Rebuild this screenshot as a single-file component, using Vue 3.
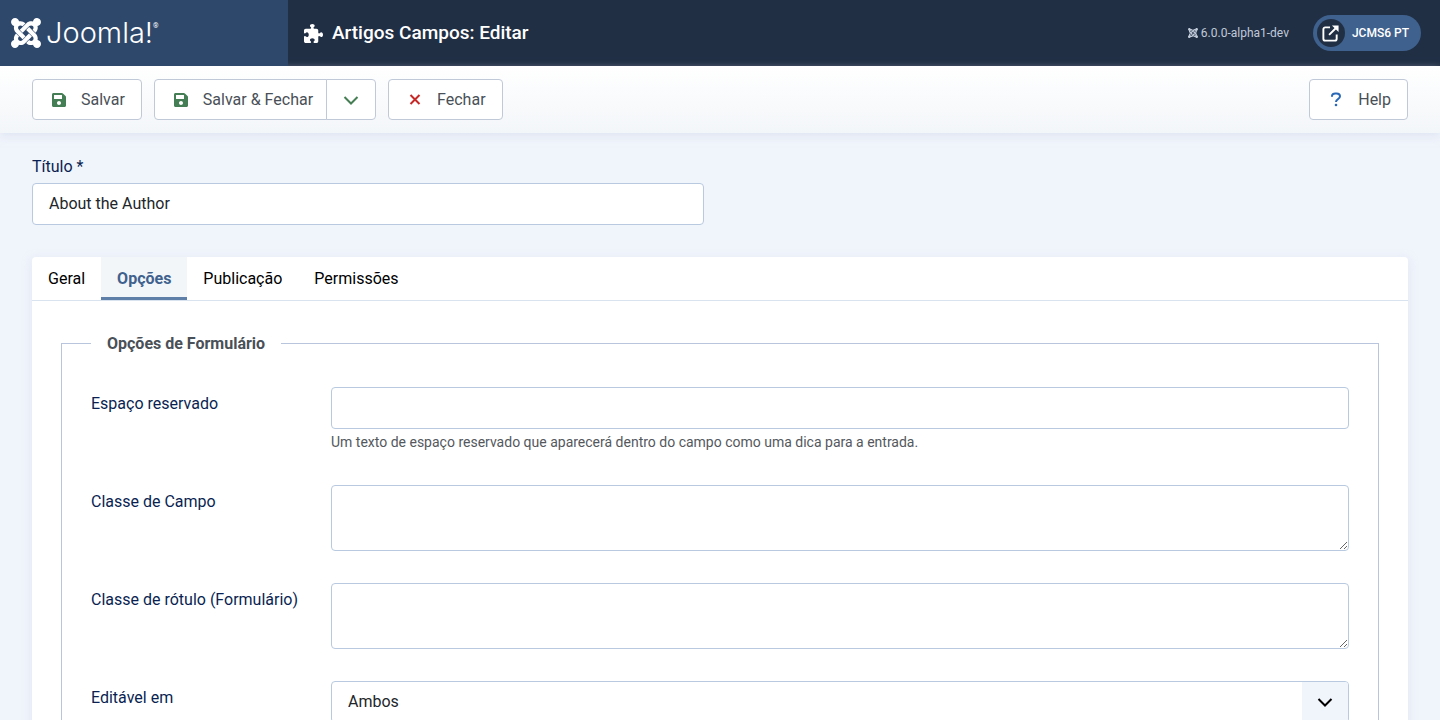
<script setup>
import { ref } from 'vue'

const title = ref('About the Author')
const activeTab = ref('Opções')
const tabs = ['Geral', 'Opções', 'Publicação', 'Permissões']
const placeholder = ref('')
const fieldClass = ref('')
const labelClass = ref('')
const editableIn = ref('Ambos')

const joomlaPath =
  'M.6 92.1C.6 58.8 27.4 32 60.4 32c30 0 54.5 21.9 59.2 50.2 32.6-7.6 67.1.6 96.5 30l-44.3 44.3c-20.5-20.5-42.6-16.3-55.4-3.5-14.3 14.3-14.3 37.9 0 52.2l99.5 99.5-44 44.3c-87.7-87.2-49.7-49.7-99.8-99.7-26.8-26.5-35-64.8-24.8-98.9C20.4 144.6.6 120.7.6 92.1zm129.5 116.4l44.3 44.3c10-10 89.7-89.7 99.7-99.8 14.3-14.3 37.6-14.3 51.9 0 12.8 12.8 17 35-3.5 55.4l44 44.3c31.2-31.2 38.5-67.6 28.9-101.2 29.2-4.1 51.9-29.2 51.9-59.5 0-33.2-26.8-60.1-59.8-60.1-30.3 0-55.4 22.5-59.5 51.6-33.8-9.9-71.7-1.5-98.3 25.1-18.3 19.1-71.1 71.5-99.6 99.9zm266.3 152.2c8.2-32.7-.9-68.5-26.3-93.9-11.8-12.2 5 4.7-99.5-99.7l-44.3 44.3 99.7 99.7c14.3 14.3 14.3 37.6 0 51.9-12.8 12.8-35 17-55.4-3.5l-44 44.3c27.6 30.2 68 38.8 102.7 28 5.5 27.4 29.7 48.1 58.9 48.1 33 0 59.8-26.8 59.8-60.1 0-30.2-22.5-55-51.6-59.1zm-84.3-53.1l-44-44.3c-87 86.4-50.4 50.4-99.7 99.8-14.3 14.3-37.6 14.3-51.9 0-13.1-13.4-16.9-35.3 3.2-55.4l-44-44.3c-30.2 30.2-38 65.2-29.5 98.3-26.7 6-46.2 29.9-46.2 58.2C0 453.2 26.8 480 59.8 480c28.6 0 52.5-19.8 58.6-46.7 32.7 8.2 68.5-.6 94.2-26 32.1-32 12.2-12.4 99.5-99.7z'
const savePath =
  'M433.941 129.941l-83.882-83.882A48 48 0 0 0 316.118 32H48C21.49 32 0 53.49 0 80v352c0 26.51 21.49 48 48 48h352c26.51 0 48-21.49 48-48V163.882a48 48 0 0 0-14.059-33.941zM224 416c-35.346 0-64-28.654-64-64 0-35.346 28.654-64 64-64s64 28.654 64 64c0 35.346-28.654 64-64 64zm96-304.52V212c0 6.627-5.373 12-12 12H76c-6.627 0-12-5.373-12-12V108c0-6.627 5.373-12 12-12h228.52c3.183 0 6.235 1.264 8.485 3.515l3.48 3.48A11.996 11.996 0 0 1 320 111.48z'
const puzzlePath =
  'M192 104.8c0-9.2-5.8-17.3-13.2-22.8C167.2 73.3 160 61.3 160 48c0-26.5 28.7-48 64-48s64 21.5 64 48c0 13.3-7.2 25.3-18.8 34c-7.4 5.5-13.2 13.6-13.2 22.8c0 12.8 10.4 23.2 23.2 23.2H336c26.5 0 48 21.5 48 48v56.8c0 12.8 10.4 23.2 23.2 23.2c9.2 0 17.3-5.8 22.8-13.2c8.7-11.6 20.7-18.8 34-18.8c26.5 0 48 28.7 48 64s-21.5 64-48 64c-13.3 0-25.3-7.2-34-18.8c-5.5-7.4-13.6-13.2-22.8-13.2c-12.8 0-23.2 10.4-23.2 23.2V464c0 26.5-21.5 48-48 48H279.2c-12.8 0-23.2-10.4-23.2-23.2c0-9.2 5.8-17.3 13.2-22.8c11.6-8.7 18.8-20.7 18.8-34c0-26.5-28.7-48-64-48s-64 21.5-64 48c0 13.3 7.2 25.3 18.8 34c7.4 5.5 13.2 13.6 13.2 22.8c0 12.8-10.4 23.2-23.2 23.2H48c-26.5 0-48-21.5-48-48V343.2C0 330.4 10.4 320 23.2 320c9.2 0 17.3 5.8 22.8 13.2C54.7 344.8 66.7 352 80 352c26.5 0 48-28.7 48-64s-21.5-64-48-64c-13.3 0-25.3 7.2-34 18.8C40.5 250.2 32.4 256 23.2 256C10.4 256 0 245.6 0 232.8V176c0-26.5 21.5-48 48-48H168.8c12.8 0 23.2-10.4 23.2-23.2z'
</script>

<template>
  <div class="page">
    <header class="header">
      <a class="brand" href="#" aria-label="Joomla!">
        <svg class="brand-mark" viewBox="0 32 448 448" aria-hidden="true"><path :d="joomlaPath" /></svg>
        <span class="brand-name">Joomla!</span><span class="brand-reg">®</span>
      </a>
      <div class="header-main">
        <h1 class="page-title">
          <svg class="title-icon" viewBox="0 0 512 512" aria-hidden="true"><path :d="puzzlePath" /></svg>
          Artigos Campos: Editar
        </h1>
        <div class="header-items">
          <span class="version">
            <svg class="version-icon" viewBox="0 32 448 448" aria-hidden="true"><path :d="joomlaPath" /></svg>
            6.0.0-alpha1-dev
          </span>
          <a class="site-link" href="#">
            <span class="site-icon">
              <svg viewBox="0 0 20 20" aria-hidden="true">
                <path class="line" d="M9.500 3.500H4.500a2 2 0 0 0-2 2v10a2 2 0 0 0 2 2h10a2 2 0 0 0 2-2v-4.500M8.500 11.500L15.500 4.500" />
                <path class="tip" d="M11.500 1.500h7v7z" />
              </svg>
            </span>
            JCMS6 PT
          </a>
        </div>
      </div>
    </header>

    <div class="toolbar">
      <button type="button" class="btn">
        <svg class="btn-icon save" viewBox="0 0 448 512" aria-hidden="true"><path :d="savePath" /></svg>
        Salvar
      </button>
      <div class="btn-group">
        <button type="button" class="btn btn-first">
          <svg class="btn-icon save" viewBox="0 0 448 512" aria-hidden="true"><path :d="savePath" /></svg>
          Salvar &amp; Fechar
        </button>
        <button type="button" class="btn btn-toggle" aria-label="Mais opções de salvar">
          <svg class="chevron" viewBox="0 0 16 16" aria-hidden="true"><path d="M1.500 5L8 11.500L14.500 5" /></svg>
        </button>
      </div>
      <button type="button" class="btn">
        <svg class="btn-icon close" viewBox="0 0 14 16" aria-hidden="true"><path d="M2.500 3l9 9M11.500 3l-9 9" /></svg>
        Fechar
      </button>
      <button type="button" class="btn help">
        <svg class="btn-icon question" viewBox="0 0 14 16" aria-hidden="true">
          <path d="M3 4.700V4.100C3 2.400 4.400 1.400 6.200 1.400H7.600C9.500 1.400 11 2.500 11 4.300C11 5.700 10.200 6.400 9 7.100C7.700 7.900 7 8.400 7 9.900" />
          <circle cx="7" cy="13" r="1.300" />
        </svg>
        Help
      </button>
    </div>

    <main class="content">
      <div class="title-field">
        <label for="title">Título *</label>
        <input id="title" v-model="title" class="control" type="text" required />
      </div>

      <section class="card">
        <div class="tabs" role="tablist">
          <button
            v-for="tab in tabs"
            :key="tab"
            type="button"
            role="tab"
            class="tab"
            :class="{ active: tab === activeTab }"
            :aria-selected="tab === activeTab"
            @click="activeTab = tab"
          >{{ tab }}</button>
        </div>

        <fieldset class="options">
          <legend>Opções de Formulário</legend>
          <div class="rows">
            <div class="row">
              <label for="hint">Espaço reservado</label>
              <div class="field">
                <input id="hint" v-model="placeholder" class="control" type="text" aria-describedby="hint-desc" />
                <div id="hint-desc" class="desc">Um texto de espaço reservado que aparecerá dentro do campo como uma dica para a entrada.</div>
              </div>
            </div>
            <div class="row">
              <label for="class">Classe de Campo</label>
              <div class="field"><textarea id="class" v-model="fieldClass" class="control area"></textarea></div>
            </div>
            <div class="row">
              <label for="label-class">Classe de rótulo (Formulário)</label>
              <div class="field"><textarea id="label-class" v-model="labelClass" class="control area"></textarea></div>
            </div>
            <div class="row">
              <label for="editable">Editável em</label>
              <div class="field select-wrap">
                <select id="editable" v-model="editableIn" class="control select">
                  <option>Ambos</option>
                </select>
                <span class="select-arrow">
                  <svg class="chevron" viewBox="0 0 16 16" aria-hidden="true"><path d="M1.500 5L8 11.500L14.500 5" /></svg>
                </span>
              </div>
            </div>
          </div>
        </fieldset>
      </section>
    </main>
  </div>
</template>

<style>
html {
  scrollbar-width: none;
  background: #f0f4fb;
}
</style>

<style scoped>
.page,
.page * {
  box-sizing: border-box;
}
.page {
  min-height: 100vh;
  background: #f0f4fb;
  color: #22262a;
  font-family: Roboto, "Liberation Sans", sans-serif;
  font-size: 16px;
  line-height: 24px;
}
button,
input,
textarea,
select {
  font: inherit;
}
.header {
  display: flex;
  height: 66px;
  background: #212f45;
  color: #fff;
}
.brand {
  display: flex;
  align-items: center;
  width: 288px;
  padding: 0 11px;
  background: #2e486b;
  color: #fff;
  text-decoration: none;
}
.brand-mark {
  width: 30px;
  height: 30px;
  margin-right: 5px;
  fill: currentColor;
}
.brand-name {
  font-family: Inter, "DejaVu Sans", sans-serif;
  font-size: 29px;
  font-weight: 300;
  line-height: 32px;
}
.brand-reg {
  align-self: flex-start;
  margin-top: 20px;
  font-size: 7px;
  line-height: 12px;
}
.header-main {
  display: flex;
  flex: 1;
  align-items: center;
  justify-content: space-between;
  padding: 0 19px 0 16px;
}
.page-title {
  display: flex;
  align-items: center;
  gap: 9px;
  margin: 0;
  font-size: 19px;
  font-weight: 500;
}
.title-icon {
  width: 19px;
  height: 19px;
  fill: currentColor;
}
.header-items {
  display: flex;
  align-items: center;
  gap: 24px;
  font-size: 12px;
}
.version {
  display: flex;
  align-items: center;
  gap: 3px;
  color: #c0cad8;
}
.version-icon {
  width: 10px;
  height: 10px;
  fill: currentColor;
}
.site-link {
  display: flex;
  align-items: center;
  gap: 7px;
  height: 36px;
  padding: 0 12px 0 4px;
  border-radius: 18px;
  background: #3f618e;
  color: #fff;
  font-weight: 500;
  text-decoration: none;
}
.site-icon {
  display: grid;
  place-items: center;
  width: 28px;
  height: 28px;
  border-radius: 50%;
  background: #212f45;
}
.site-icon svg {
  width: 19px;
  height: 19px;
}
.line {
  fill: none;
  stroke: #fff;
  stroke-width: 2;
}
.tip {
  fill: #fff;
}
.toolbar {
  display: flex;
  gap: 12px;
  padding: 13px 32px;
  background: linear-gradient(#fff, #f3f6f9);
  box-shadow: 0 3px 8px #d3dcec99;
}
.btn-group {
  display: flex;
}
.btn {
  display: flex;
  align-items: center;
  gap: 15px;
  height: 41px;
  padding: 0 16px 0 19px;
  border: 1px solid #c0c9d8;
  border-radius: 4px;
  background: #fff;
  color: #495057;
}
.btn-icon {
  width: 14px;
  height: 16px;
}
.btn-first {
  padding-right: 13px;
  border-radius: 4px 0 0 4px;
}
.btn-toggle {
  width: 50px;
  margin-left: -1px;
  padding: 0;
  justify-content: center;
  border-radius: 0 4px 4px 0;
  color: #457d54;
}
.help {
  margin-left: auto;
}
.save {
  fill: #457d54;
}
.close {
  fill: none;
  stroke: #c52827;
  stroke-width: 2;
}
.question {
  fill: none;
  stroke: #2a69b8;
  stroke-width: 2;
}
.question circle {
  fill: #2a69b8;
  stroke: none;
}
.chevron {
  width: 16px;
  height: 16px;
  fill: none;
  stroke: currentColor;
  stroke-width: 2;
}
.content {
  padding: 22px 32px 32px;
}
label {
  color: #0a1f52;
}
.title-field {
  display: flex;
  flex-direction: column;
  gap: 4px;
  width: calc(50% - 16px);
}
.control {
  display: block;
  width: 100%;
  height: 42px;
  padding: 7px 16px 9px;
  border: 1px solid #b8c9e0;
  border-radius: 4px;
  background: #fff;
  color: #22262a;
}
.area {
  height: 66px;
  resize: vertical;
}
.card {
  margin-top: 32px;
  padding-bottom: 29px;
  border-radius: 4px;
  background: #fff;
  box-shadow: 0 3px 10px #d3dcec99;
}
.tabs {
  display: flex;
  margin-bottom: 30px;
  overflow: hidden;
  border-bottom: 1px solid #d9e2ef;
  border-radius: 4px 4px 0 0;
}
.tab {
  height: 43px;
  padding: 0 16px;
  border: 0;
  background: none;
  color: #000;
}
.tab.active {
  background: #f3f6f9;
  box-shadow: inset 0 -3px #5e80a8;
  color: #3f618e;
  font-weight: 700;
}
.options {
  min-width: 0;
  margin: 0 29px;
  padding: 31px 29px 29px;
  border: 1px solid #b8c5dc;
}
legend {
  padding: 0 16px;
  color: #495057;
  font-weight: 700;
  line-height: 25px;
}
.rows {
  display: grid;
  gap: 32px;
}
.row {
  display: grid;
  grid-template-columns: 220px minmax(0, 1fr);
  column-gap: 20px;
}
.row label {
  padding-top: 5px;
}
.desc {
  padding-top: 2px;
  color: #54585d;
  font-size: 14px;
  line-height: 22px;
}
.select-wrap {
  position: relative;
}
.select {
  appearance: none;
  padding: 8px 56px 8px 16px;
}
.select-arrow {
  position: absolute;
  top: 1px;
  right: 1px;
  bottom: 1px;
  display: grid;
  place-items: center;
  width: 46px;
  border-radius: 0 3px 3px 0;
  background: #f0f4fb;
  color: #000;
  pointer-events: none;
}
</style>
